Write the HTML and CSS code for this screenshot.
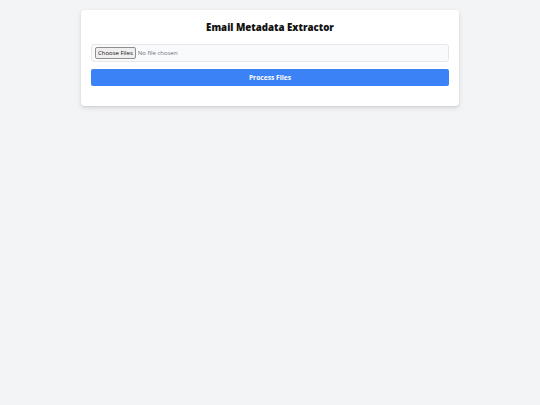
FILE: index.html
```html
<!DOCTYPE html>
<html>
<head>
<meta charset="utf-8">
<title>Email Metadata Extractor</title>
<link rel="stylesheet" href="styles.css">
</head>
<body>
<div class="page">
  <div class="card">
    <h1 class="title">Email Metadata Extractor</h1>
    <div class="file-box">
      <input class="file-input" type="file" multiple>
    </div>
    <button class="process-btn" type="button">Process Files</button>
  </div>
</div>
</body>
</html>
```
FILE: styles.css
```css
html, body {
  margin: 0;
  padding: 0;
}
body {
  background: #f3f4f6;
  font-family: "Open Sans", "Liberation Sans", sans-serif;
  min-height: 405px;
}
.page {
  display: flex;
  justify-content: center;
  padding-top: 10px;
}
.card {
  width: 358px;
  background: #ffffff;
  border-radius: 4px;
  box-shadow: 0 2px 5px rgba(0,0,0,0.12), 0 1px 2px rgba(0,0,0,0.06);
  padding: 11px 10px 20px 10px;
  display: flex;
  flex-direction: column;
}
.title {
  margin: 0 0 9px 0;
  font-size: 9.7px;
  line-height: 14px;
  font-weight: 800;
  text-align: center;
  color: #111111;
}
.file-box {
  box-sizing: border-box;
  height: 18px;
  border: 1px solid #e5e7eb;
  border-radius: 3px;
  background: #f9fafb;
  padding: 0 3px;
  display: flex;
  align-items: center;
  margin-bottom: 7px;
}
.file-input {
  font-family: "Open Sans", "Liberation Sans", sans-serif;
  font-size: 6px;
  color: #6b7280;
}
.file-input::file-selector-button {
  font-family: "Open Sans", "Liberation Sans", sans-serif;
  font-size: 6px;
  color: #111;
  background: #efefef;
  border: 1px solid #8f8f8f;
  border-radius: 2px;
  padding: 1px 2px;
  margin-right: 2px;
  height: 12px;
}
.process-btn {
  height: 17px;
  border: none;
  border-radius: 2px;
  background: #3b82f6;
  color: #ffffff;
  font-family: "Open Sans", "Liberation Sans", sans-serif;
  font-size: 6.7px;
  font-weight: 700;
  padding: 0;
}
```
